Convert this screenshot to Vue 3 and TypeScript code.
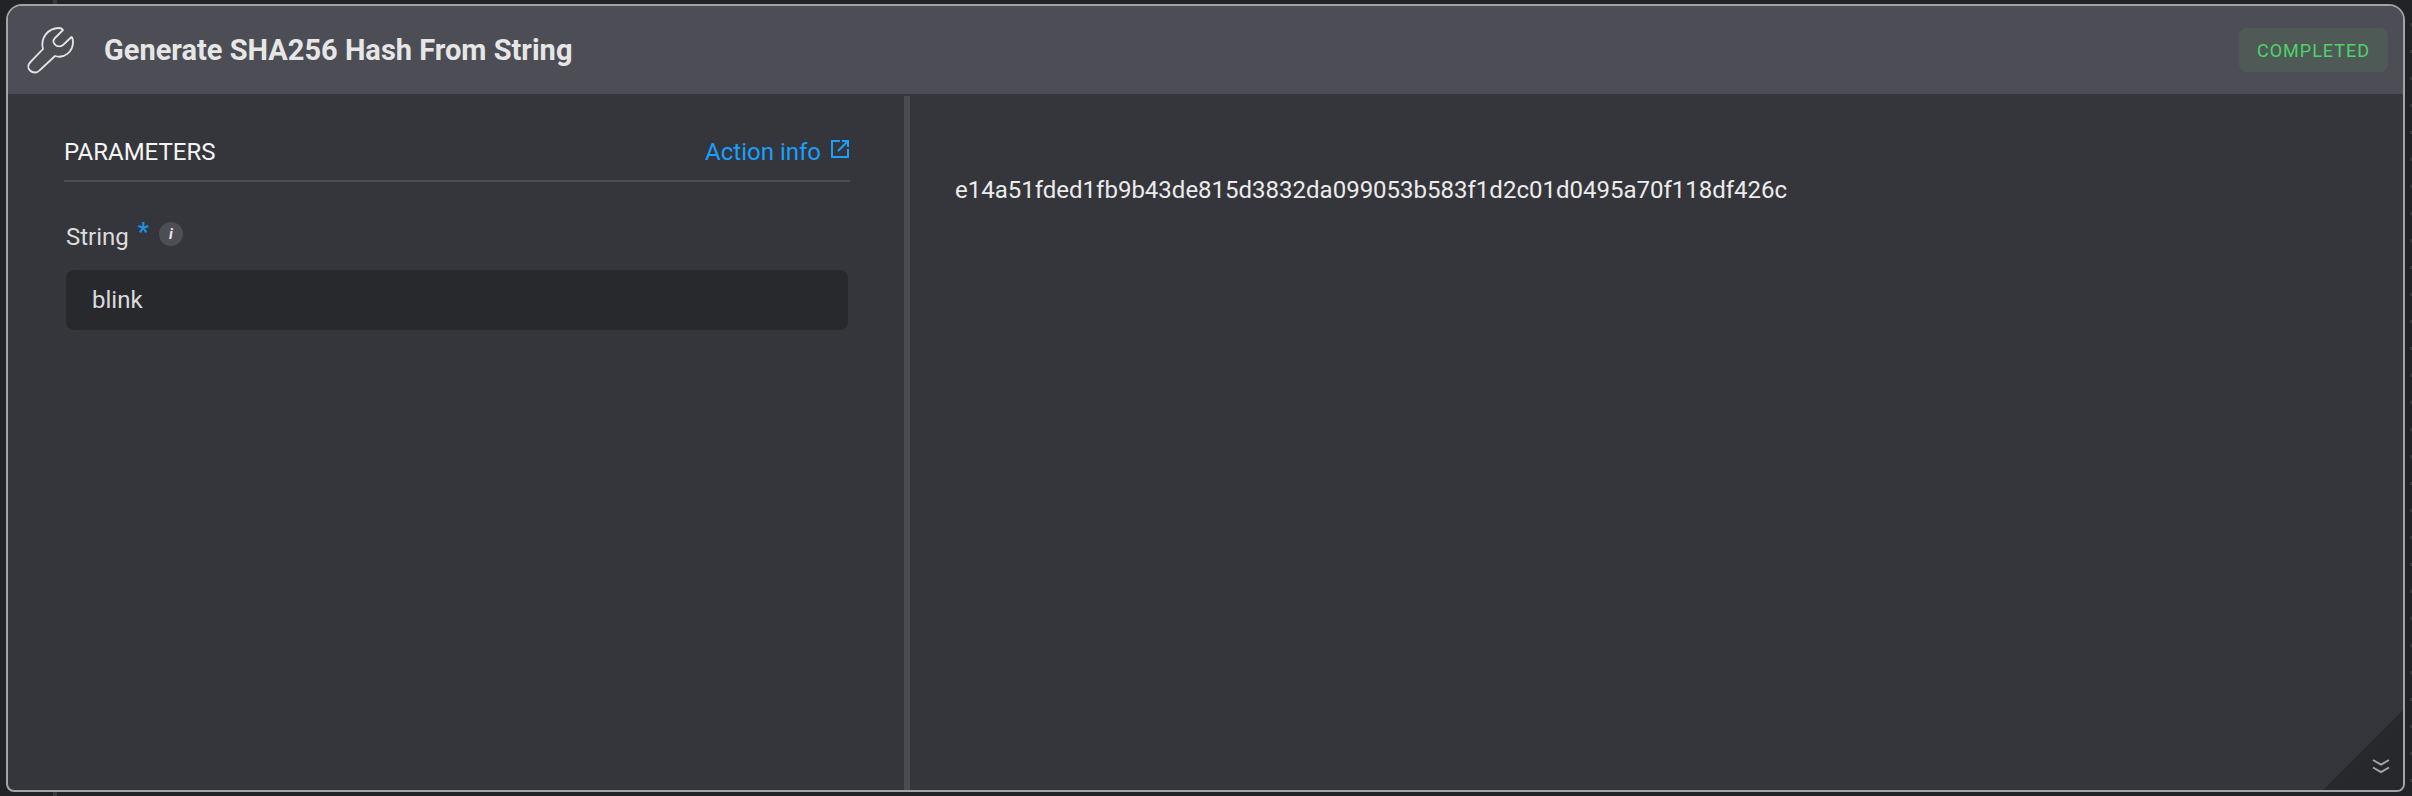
<template>
  <div class="page">
    <i class="tick tick-top"></i>
    <i class="tick tick-bottom"></i>
    <i class="dashes"></i>
    <section class="card">
      <header class="head">
        <svg class="wrench" viewBox="-1 -1 48 48" fill="none" stroke="#e4e4e5" stroke-width="1.800" stroke-linejoin="round" stroke-linecap="round">
          <path d="M15 22C12 11 20 1 31 1c1.500 0 3 .5 4 2l-8 8c-2 2-2 4.500 0 6.500 2 2.500 5.500 2.500 8 .5l8.500-8c1.500 1 1.500 3 1.500 5 0 10-9 17-18 14L12 43c-3 3.500-7.500 3-10 .5S0 37.500 2.500 35L15 22Z" />
        </svg>
        <h1 class="title">{{ title }}</h1>
        <span class="status">{{ status }}</span>
      </header>
      <div class="body">
        <aside class="params">
          <div class="params-head">
            <span class="params-title">PARAMETERS</span>
            <a class="info-link">
              Action info
              <svg class="ext" viewBox="0 0 18 18" fill="none" stroke="#1a9fff" stroke-width="2">
                <path d="M9 1H1v16h16V9" />
                <path d="M7 11 16.500 1.500M11 1h6v6" />
              </svg>
            </a>
          </div>
          <div class="field-label">
            <span>String</span>
            <span class="req">*</span>
            <span class="hint">i</span>
          </div>
          <div class="input">blink</div>
        </aside>
        <main class="output">
          <div class="hash">{{ hash }}</div>
          <div class="corner">
            <svg class="chevrons" viewBox="0 0 18 15" fill="none" stroke="#a5a6a9" stroke-width="2">
              <path d="m1 1 8 4.500L17 1M1 8.500l8 4.500 8-4.500" />
            </svg>
          </div>
        </main>
      </div>
    </section>
  </div>
</template>

<script setup lang="ts">
const title = 'Generate SHA256 Hash From String'
const status = 'COMPLETED'
const hash = 'e14a51fded1fb9b43de815d3832da099053b583f1d2c01d0495a70f118df426c'
</script>

<style scoped>
.page {
  position: relative;
  width: 2412px;
  height: 796px;
  box-sizing: border-box;
  padding: 4px 7px 4px 6px;
  background: #222327;
  font-family: Roboto, "Liberation Sans", sans-serif;
}

.tick {
  position: absolute;
  width: 4px;
  height: 4px;
  background: #38393e;
}

.tick-top {
  top: 0;
  left: 53px;
}

.tick-bottom {
  bottom: 0;
  left: 53px;
}

.dashes {
  position: absolute;
  top: 23px;
  bottom: 0;
  right: 0;
  width: 2px;
  background: repeating-linear-gradient(#35363a 0 3px, transparent 3px 27px);
}

.card {
  position: relative;
  height: 100%;
  box-sizing: border-box;
  display: flex;
  flex-direction: column;
  border: 2px solid #a3a4a7;
  border-radius: 16px 16px 8px 8px;
  background: #35363b;
  overflow: hidden;
}

.head {
  height: 88px;
  flex: none;
  display: flex;
  align-items: center;
  padding: 0 15px 0 19px;
  background: #4c4d55;
}

.wrench {
  width: 48px;
  height: 48px;
  margin-right: 29px;
}

.title {
  margin: 0;
  font-size: 29px;
  font-weight: 700;
  color: #e6e6e6;
}

.status {
  margin-left: auto;
  width: 149px;
  height: 44px;
  display: flex;
  align-items: center;
  justify-content: center;
  border-radius: 8px;
  background: #4f5a57;
  color: #4cd469;
  font-size: 18px;
  letter-spacing: 1px;
}

.body {
  flex: 1;
  display: flex;
  min-height: 0;
}

.params {
  width: 902px;
  flex: none;
  box-sizing: border-box;
  padding: 28px 54px 0 56px;
  border-right: 6px solid #4b4c52;
  margin-top: 2px;
}

.params-head {
  height: 58px;
  box-sizing: border-box;
  display: flex;
  align-items: center;
  justify-content: space-between;
  border-bottom: 2px solid #4b4c52;
}

.params-title {
  font-size: 24px;
  color: #f4f4f4;
}

.info-link {
  display: flex;
  align-items: center;
  gap: 10px;
  font-size: 24px;
  color: #1a9fff;
}

.ext {
  width: 18px;
  height: 18px;
  margin: -6px 1px 0 0;
}

.field-label {
  display: flex;
  align-items: center;
  margin: 39px 0 0 2px;
  height: 32px;
  font-size: 24px;
  color: #dcdcdd;
}

.req {
  margin-left: 9px;
  margin-bottom: 10px;
  font-size: 25px;
  font-weight: 500;
  color: #1a94e8;
}

.hint {
  width: 24px;
  height: 24px;
  margin-left: 10px;
  margin-bottom: 6px;
  display: flex;
  align-items: center;
  justify-content: center;
  border-radius: 50%;
  background: #4c4d55;
  color: #e8e8e8;
  font-size: 15px;
  font-style: italic;
  font-weight: 700;
}

.input {
  height: 60px;
  margin: 17px 2px 0 2px;
  box-sizing: border-box;
  padding-left: 26px;
  display: flex;
  align-items: center;
  border-radius: 8px;
  background: #28292d;
  font-size: 24px;
  color: #dcdcdd;
}

.output {
  flex: 1;
  position: relative;
  padding: 82px 0 0 45px;
}

.hash {
  font-size: 24px;
  line-height: 28px;
  color: #ececec;
}

.corner {
  position: absolute;
  right: 0;
  bottom: 0;
  width: 80px;
  height: 80px;
  background: #27282c;
  clip-path: polygon(100% 0, 100% 100%, 0 100%);
}

.chevrons {
  position: absolute;
  right: 13px;
  bottom: 16px;
  width: 18px;
  height: 15px;
}
</style>
